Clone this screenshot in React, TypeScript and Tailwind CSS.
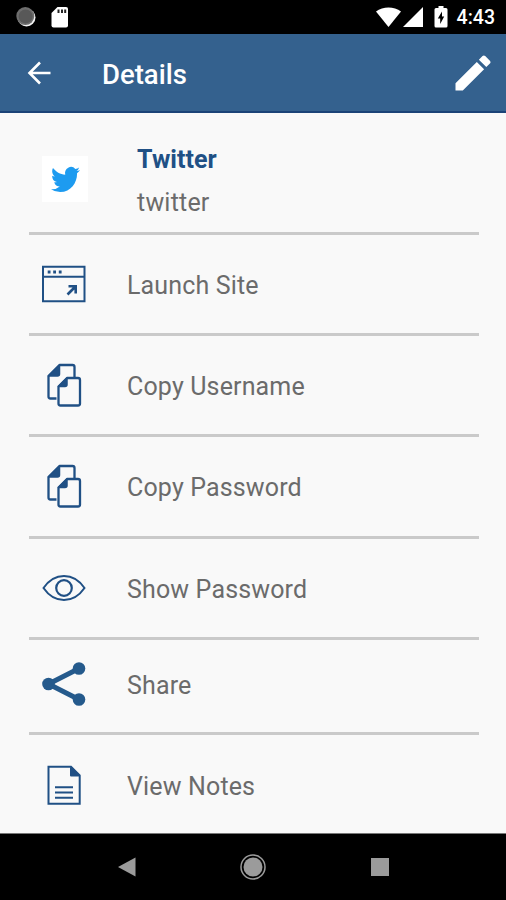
import type { ReactNode } from "react";
import clsx from "clsx";

function StatusBar() {
  return (
    <div className="flex h-[34px] shrink-0 items-center bg-black pl-4 pr-[11px]">
      <svg width="20" height="20" viewBox="0 0 20 20">
        <circle cx="10.5" cy="10.5" r="9" fill="#f2f2f2" />
        <circle cx="9.3" cy="9.1" r="9" fill="#6e6e6e" />
        <circle cx="9.6" cy="9.4" r="7" fill="#585858" />
      </svg>
      <svg className="ml-[15px]" width="18" height="22" viewBox="0 0 18 22">
        <path d="M6.5 1H15a2 2 0 0 1 2 2v16.500a2 2 0 0 1-2 2H2.500a2 2 0 0 1-2-2V7z" fill="#fff" />
        <path d="M6.500 3.500h2v3.500h-2zM10 3.500h2v3.500h-2zM13.200 3.500h2v3.500h-2z" fill="#222" />
      </svg>
      <div className="ml-auto flex items-center">
        <svg width="27" height="20" viewBox="0 0 27 20">
          <path d="M0 4.500C7-0.800 18-0.800 25 4.500L12.500 20z" fill="#fff" />
        </svg>
        <svg width="21" height="20" viewBox="0 0 21 20">
          <path d="M20 0v20H0z" fill="#fff" />
        </svg>
        <svg className="ml-[10px]" width="14" height="22" viewBox="0 0 14 22">
          <path d="M4.500 0h5v2H12a1.500 1.500 0 0 1 1.500 1.500v16.500a1.500 1.500 0 0 1-1.500 1.500H2A1.500 1.500 0 0 1 .500 20V3.500A1.500 1.500 0 0 1 2 2h2.500z" fill="#fff" />
          <path d="M8 5.500v5h2.200L6.200 18v-5.500H3.800z" fill="#000" />
        </svg>
        <span className="ml-[9px] pt-[2px] text-[19.500px] leading-none font-medium text-white">4:43</span>
      </div>
    </div>
  );
}

function Header() {
  return (
    <header className="flex h-[79px] shrink-0 items-center border-b-2 border-[#1c4377] bg-[#34618e] pl-[27px] pr-[15px] text-white">
      <svg width="24" height="24" viewBox="0 0 24 24" fill="none" stroke="currentColor" strokeWidth="2.600">
        <path d="M23.500 12H3M13 1.500L2.500 12L13 22.500" />
      </svg>
      <h1 className="ml-[51px] pt-[5px] text-[27.500px] leading-none font-medium">Details</h1>
      <svg className="ml-auto" width="36" height="36" viewBox="0 0 36 36" fill="currentColor">
        <path d="M0.500 28.200L21.800 6.900L29.100 14.200L7.800 35.500H0.500zM34.900 8.500a2 2 0 0 0 0-2.700L30.200 1.100a2 2 0 0 0-2.700 0L23.900 4.700L31.300 12.100z" />
      </svg>
    </header>
  );
}

function IconFrame({ children }: { children: ReactNode }) {
  return (
    <svg className="shrink-0" width="44" height="44" viewBox="0 0 44 44" fill="none" stroke="#205085" strokeWidth="2">
      {children}
    </svg>
  );
}

function LaunchIcon() {
  return (
    <IconFrame>
      <path d="M1 4.700h41.500v34.600H1zM1 14.700h41.500" />
      <path d="M5.700 10h2.800M11.200 10H14M16.800 10h2.800" strokeWidth="2.800" />
      <path d="M25.500 32.500l8-8M26.500 24.300h7.200v7.200" strokeWidth="2.600" />
    </IconFrame>
  );
}

function CopyIcon() {
  return (
    <IconFrame>
      <g strokeLinejoin="round">
        <path d="M16 35.500H10a2 2 0 0 1-2-2V13L19 2h13a2 2 0 0 1 2 2v11" transform="translate(-1.500 0)" strokeWidth="2.300" />
        <path d="M6.500 13L17.500 2v9a2 2 0 0 1-2 2z" fill="#205085" strokeWidth="1.500" />
        <path d="M16.500 23.500L25 15H36a2 2 0 0 1 2 2v23.500a2 2 0 0 1-2 2H18.500a2 2 0 0 1-2-2z" fill="#f9f9f9" strokeWidth="2.300" />
        <path d="M16.500 23.500L25 15v6.500a2 2 0 0 1-2 2z" fill="#205085" strokeWidth="1.500" />
      </g>
    </IconFrame>
  );
}

function EyeIcon() {
  return (
    <IconFrame>
      <path d="M1.500 22C7 14 14 10 22 10s15 4 20.500 12c-5.500 8-12.500 12-20.500 12S7 30 1.500 22z" />
      <circle cx="22" cy="22" r="7.800" strokeWidth="2.200" />
    </IconFrame>
  );
}

function ShareIcon() {
  return (
    <IconFrame>
      <path d="M37 6.500L6.500 22L37 37.500" stroke="#255a8c" strokeWidth="5" />
      <g fill="#255a8c" stroke="none">
        <circle cx="37" cy="6.500" r="6.300" />
        <circle cx="6.500" cy="22" r="6.300" />
        <circle cx="37" cy="37.500" r="6.300" />
      </g>
    </IconFrame>
  );
}

function NotesIcon() {
  return (
    <IconFrame>
      <path d="M6.500 3.700H29l8.700 8.700v28.300H6.500z" />
      <path d="M29 5v7.400h7.400z" fill="#205085" strokeLinejoin="round" />
      <path d="M13 24.200h18M13 29.500h18M13 34.800h18" />
    </IconFrame>
  );
}

function TwitterLogo() {
  return (
    <div className="flex size-[46px] shrink-0 items-center justify-center bg-white">
      <svg width="29" height="31" viewBox="0 0 24 24" fill="#1d9bf0" preserveAspectRatio="none">
        <path d="M23.953 4.570a10 10 0 01-2.825.775 4.958 4.958 0 002.163-2.723c-.951.555-2.005.959-3.127 1.184a4.920 4.920 0 00-8.384 4.482C7.690 8.095 4.067 6.130 1.640 3.162a4.822 4.822 0 00-.666 2.475c0 1.710.870 3.213 2.188 4.096a4.904 4.904 0 01-2.228-.616v.060a4.923 4.923 0 003.946 4.827 4.996 4.996 0 01-2.212.085 4.936 4.936 0 004.604 3.417 9.867 9.867 0 01-6.102 2.105c-.390 0-.779-.023-1.170-.067a13.995 13.995 0 007.557 2.209c9.053 0 13.998-7.496 13.998-13.985 0-.210 0-.420-.015-.630A9.935 9.935 0 0024 4.590z" />
      </svg>
    </div>
  );
}

const actions = [
  { label: "Launch Site", icon: <LaunchIcon />, height: "h-[101px]" },
  { label: "Copy Username", icon: <CopyIcon />, height: "h-[101px]" },
  { label: "Copy Password", icon: <CopyIcon />, height: "h-[102px] pb-px" },
  { label: "Show Password", icon: <EyeIcon />, height: "h-[101px]" },
  { label: "Share", icon: <ShareIcon />, height: "h-[95px] pb-[5px]" },
  { label: "View Notes", icon: <NotesIcon />, height: "h-[98px] pt-px" },
];

function NavBar() {
  return (
    <nav className="flex h-[67px] shrink-0 items-center justify-between border-t border-[#777] bg-black pl-[117px] pr-[117px]">
      <svg width="20" height="20" viewBox="0 0 20 20" fill="#9b9b9b">
        <path d="M1 10L18.500 0.500v19z" />
      </svg>
      <svg className="-ml-[2px]" width="28" height="28" viewBox="0 0 28 28">
        <circle cx="14" cy="14" r="12" fill="none" stroke="#9b9b9b" strokeWidth="1.500" />
        <circle cx="14" cy="14" r="9.500" fill="#9b9b9b" />
      </svg>
      <div className="size-[18px] bg-[#9b9b9b]" />
    </nav>
  );
}

export default function App() {
  return (
    <div className="flex h-[900px] w-[506px] flex-col overflow-hidden bg-[#f9f9f9] font-['Roboto',sans-serif]">
      <StatusBar />
      <Header />
      <main className="flex-1 pl-[29px] pr-[27px]">
        <div className="flex h-[122px] items-start border-b-[3px] border-[#cacaca] pl-[13px] pt-[43px]">
          <TwitterLogo />
          <div className="-mt-[11px] ml-[49px] flex flex-col gap-[13px] text-[25px] leading-[30px] tracking-[0.2px]">
            <span className="font-bold tracking-[0.05px] text-[#205085]">Twitter</span>
            <span className="text-[#6b6b6b]">twitter</span>
          </div>
        </div>
        {actions.map(({ label, icon, height }, i) => (
          <div
            key={label}
            className={clsx(
              "flex items-center pl-[13px]",
              height,
              i < actions.length - 1 && "border-b-[3px] border-[#cacaca]"
            )}
          >
            {icon}
            <span className="ml-[41px] pt-1 text-[25px] leading-[30px] tracking-[0.15px] text-[#6b6b6b]">{label}</span>
          </div>
        ))}
      </main>
      <NavBar />
    </div>
  );
}
